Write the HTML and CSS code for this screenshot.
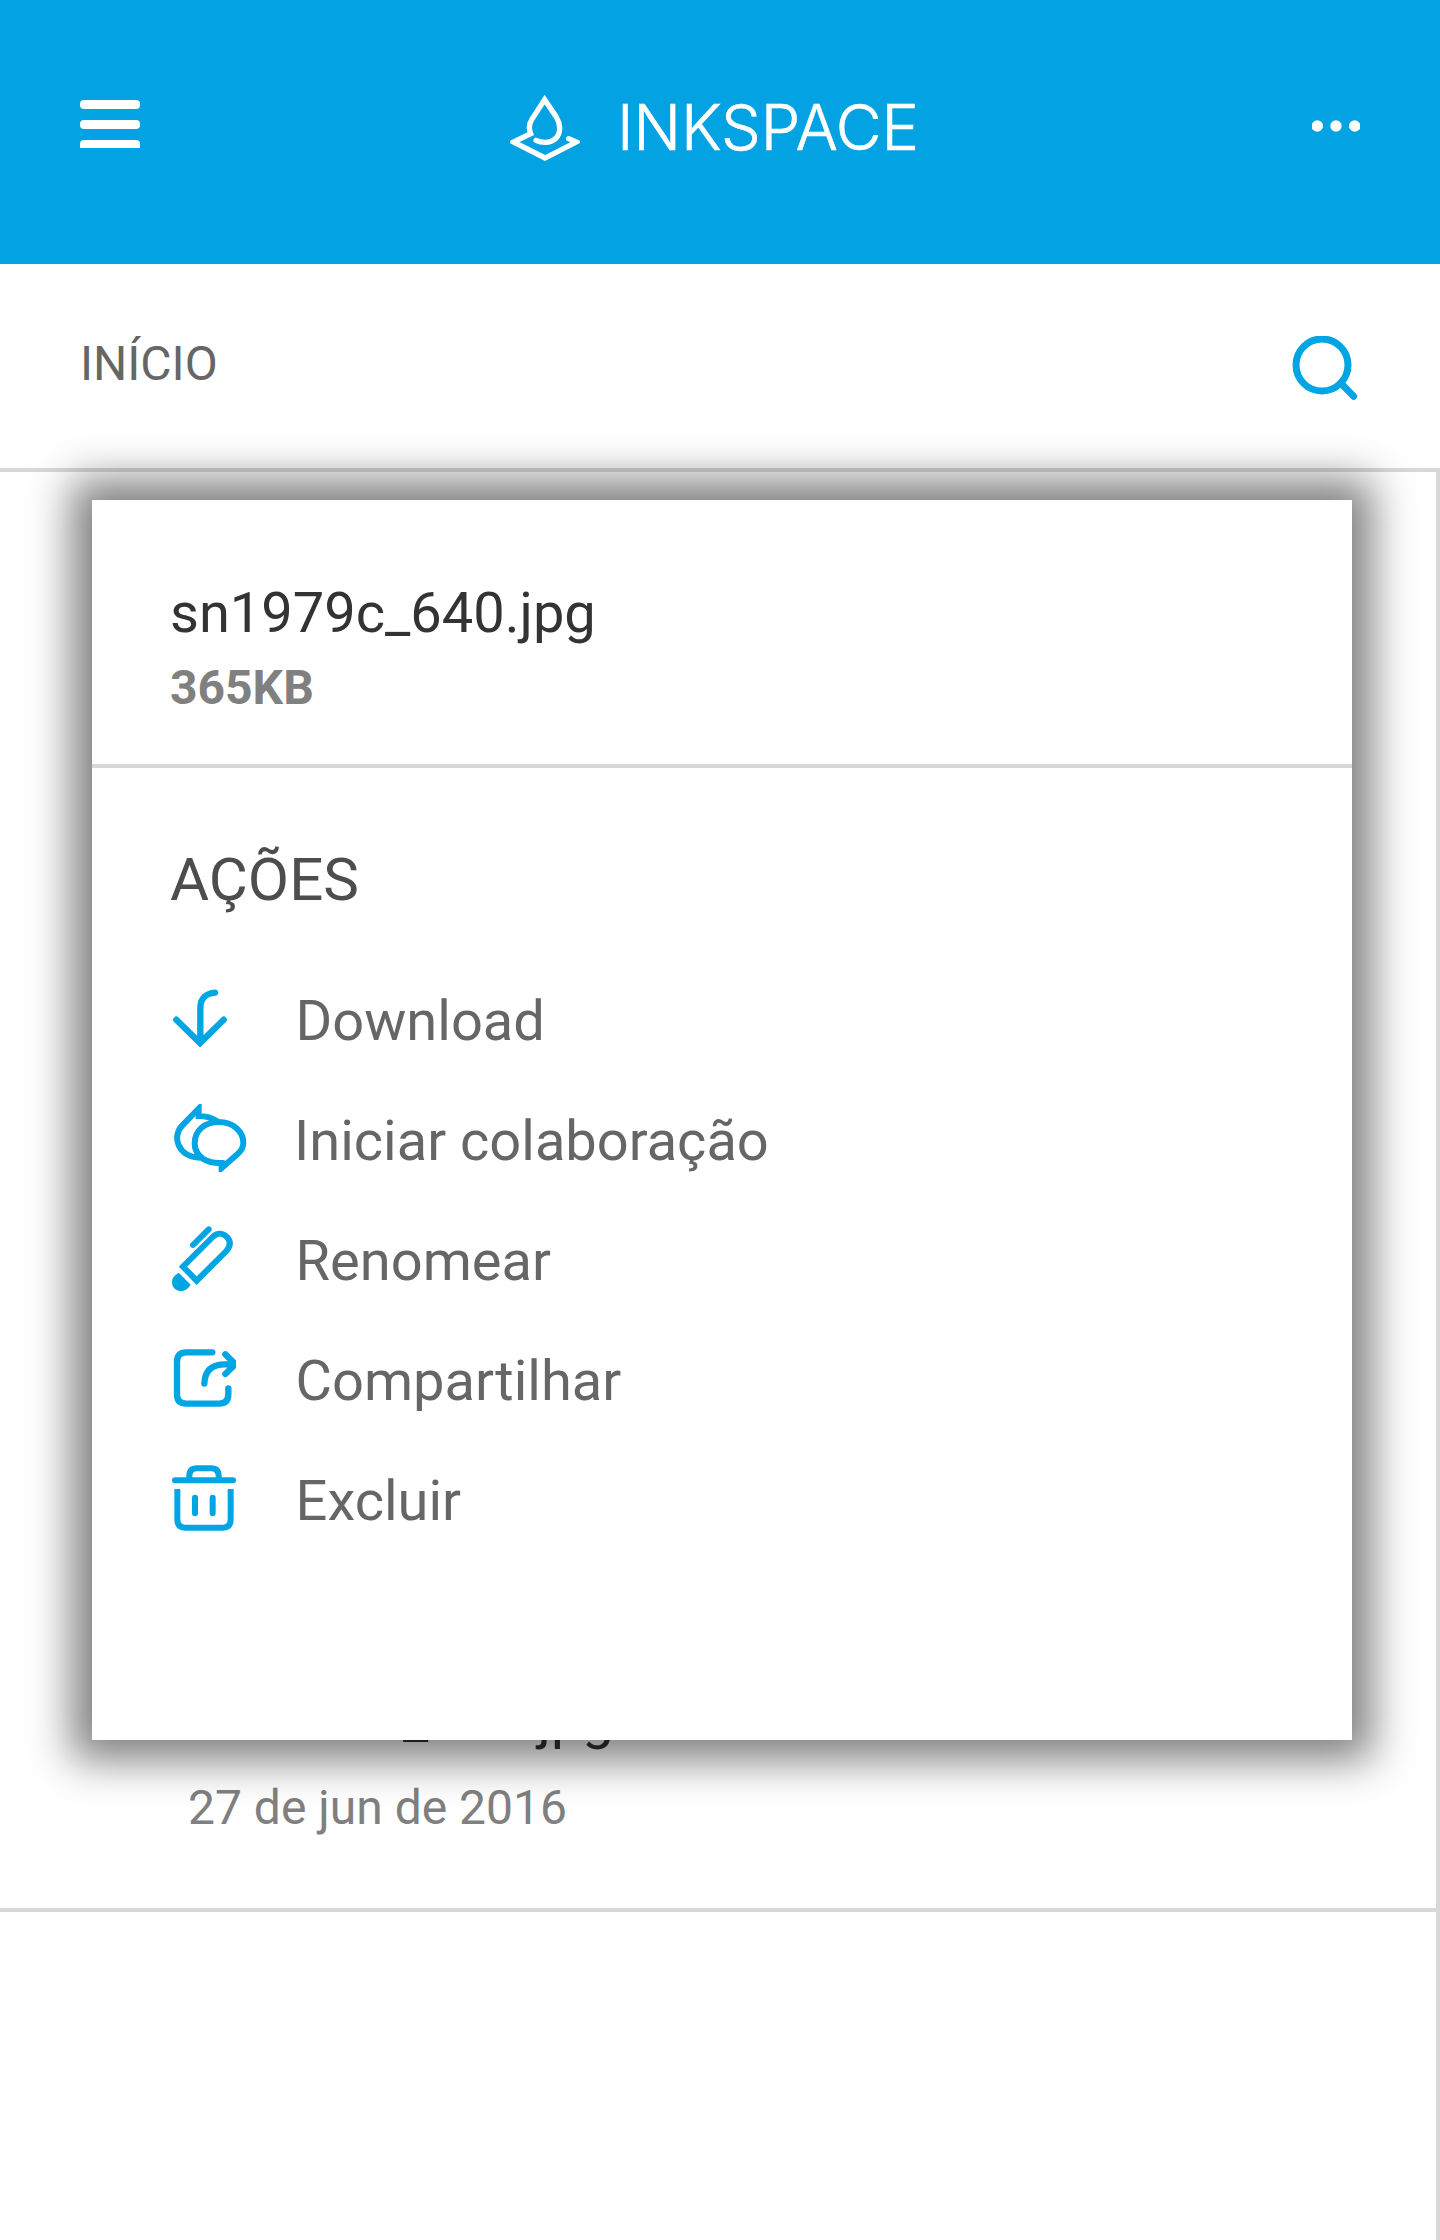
FILE: index.html
```html
<!DOCTYPE html>
<html lang="pt">
<head>
<meta charset="utf-8">
<title>Inkspace</title>
<link rel="stylesheet" href="styles.css">
</head>
<body>
<header class="topbar">
  <svg class="menu" viewBox="0 0 60 48"><rect width="60" height="9" rx="4"/><rect y="20" width="60" height="9" rx="4"/><path d="M0 48V44Q0 40 4 40H56Q60 40 60 44V48Z"/></svg>
  <div class="logo">
    <svg class="drop" viewBox="90 75 210 201"><path d="M168 211Q180 217 196 217C222 217 239 200 239 174C239 160 235 151 229 141L194 89L155 149C145 165 146 176 152 191L100 216L195 264L289 216L266 206"/></svg>
    <span class="wordmark">INKSPACE</span>
  </div>
  <svg class="more" viewBox="0 0 48 12"><circle cx="5.3" cy="6" r="5.7"/><circle cx="24" cy="6" r="5.7"/><circle cx="42.7" cy="6" r="5.7"/></svg>
</header>
<nav class="crumbs">
  <span class="crumb">INÍCIO</span>
  <svg class="search" viewBox="96 768 198 195"><circle cx="186" cy="855" r="78"/><path d="M245 912L281 949"/></svg>
</nav>
<main class="files">
  <article class="file">
    <div class="file-name">sn1979c_640.jpg</div>
    <div class="file-date">27 de jun de 2016</div>
  </article>
</main>
<section class="dialog">
  <div class="dialog-head">
    <div class="dialog-name">sn1979c_640.jpg</div>
    <div class="dialog-size">365KB</div>
  </div>
  <h2 class="dialog-title">AÇÕES</h2>
  <ul class="actions">
    <li><svg class="icon" viewBox="66 -30 234 360"><path d="M195 68C168 70 151 86 151 114V214M79 149L150 219L221 149"/></svg><span>Download</span></li>
    <li class="wide"><svg class="icon sharp" viewBox="66 330 234 360"><svg x="66" y="402" width="234" height="204" viewBox="66 402 234 204"><path d="M204 455C186 443 170 438 146 438V416L97 466C64 499 84 562 150 563M214 579C170 581 134 560 134 520C134 481 165 456 206 456C250 456 280 485 280 518C280 534 272 544 262 553L215 594V570"/></svg></svg><span>Iniciar colaboração</span></li>
    <li><svg class="icon sharp" viewBox="66 0 234 360"><path class="round" d="M176 88L129 135"/><path d="M99 200L188 111C203 96 220 100 231 111C242 123 242 138 229 153L140 242Z"/><path class="solid" d="M86 218L122 254C112 269 101 274 92 273C75 271 66 262 66 245C67 232 75 225 86 218Z"/></svg><span>Renomear</span></li>
    <li><svg class="icon" viewBox="66 360 234 360"><path d="M187 457H109Q81 457 81 485V583Q81 611 109 611H207Q235 611 235 583V565"/><svg x="66" y="440" width="192" height="190" viewBox="66 440 192 190"><path d="M163 551Q165 493 225 493H250M226 463L256 493L226 522"/></svg></svg><span>Compartilhar</span></li>
    <li><svg class="icon sharp" viewBox="66 720 234 360"><path class="round" d="M75 841H249M135 893V940M188 893V940"/><path d="M118 838V828Q118 805 141 805H183Q206 805 206 828V838M82 867V958Q82 983 106 983H218Q242 983 242 958V867"/></svg><span>Excluir</span></li>
  </ul>
</section>
</body>
</html>
```

FILE: styles.css
```css
* { box-sizing: border-box; }
body {
  margin: 0;
  height: 2240px;
  position: relative;
  display: flex;
  flex-direction: column;
  overflow: hidden;
  background: #fff;
  font-family: Roboto, sans-serif;
}
svg { display: block; flex: none; }

.topbar {
  height: 264px;
  display: flex;
  align-items: flex-start;
  padding: 94px 80px 0;
  background: #02a2e3;
}
.menu { width: 60px; height: 48px; margin-top: 6px; fill: #fff; }
.logo { display: flex; align-items: flex-start; margin-left: 370px; }
.drop { width: 70px; height: 67px; margin-top: 1px; fill: none; stroke: #fff; stroke-width: 16; stroke-linecap: round; }
.wordmark {
  margin: -5px 0 0 37px;
  font: 300 63px/76px Inter, sans-serif;
  letter-spacing: -.2px;
  color: #fff;
  -webkit-text-stroke: .6px #fff;
}
.more { width: 48px; height: 12px; margin: 26px 0 0 auto; fill: #fff; }

.crumbs {
  height: 208px;
  display: flex;
  justify-content: space-between;
  align-items: flex-start;
  padding: 72px 82px 0 80px;
  border-bottom: 4px solid #d8d8d8;
}
.crumb { font-size: 48px; line-height: 56px; color: #666; }
.search { width: 66px; height: 65px; fill: none; stroke: #02a5e4; stroke-width: 21; stroke-linecap: round; }

.files { flex: 1; border-right: 4px solid #d8d8d8; }
.file {
  height: 1440px;
  display: flex;
  flex-direction: column;
  justify-content: flex-end;
  padding: 0 0 64px 188px;
  border-bottom: 4px solid #d8d8d8;
}
.file-name { font-size: 56px; line-height: 72px; color: #333; }
.file-date { margin-top: 17px; font-size: 48px; line-height: 72px; color: #808080; }

/* Sheet that floats over the file list */
.dialog {
  position: absolute;
  left: 92px;
  top: 500px;
  width: 1260px;
  height: 1240px;
  background: #fff;
  box-shadow: 0 0 40px 20px rgba(0, 0, 0, .5);
}
.dialog-head { height: 268px; padding: 77px 78px 0; border-bottom: 4px solid #d8d8d8; }
.dialog-name { font-size: 56px; line-height: 72px; color: #333; }
.dialog-size { margin-top: 3px; font-size: 48px; line-height: 72px; font-weight: 700; color: #808080; }
.dialog-title { margin: 76px 78px 0; font-size: 60px; line-height: 72px; font-weight: 400; color: #4d4d4d; }
.actions { list-style: none; margin: 44px 0 0; padding: 0 80px; }
.actions li { display: flex; height: 120px; gap: 45.6px; font-size: 56px; line-height: 122px; color: #666; }
.actions .wide { gap: 44px; }
.icon { width: 78px; height: 120px; fill: none; stroke: #02a5e4; stroke-width: 19; stroke-linecap: round; }
.sharp { stroke-linecap: butt; stroke-width: 18; }
.round { stroke-linecap: round; }
.solid { fill: #02a5e4; stroke: none; }
```
